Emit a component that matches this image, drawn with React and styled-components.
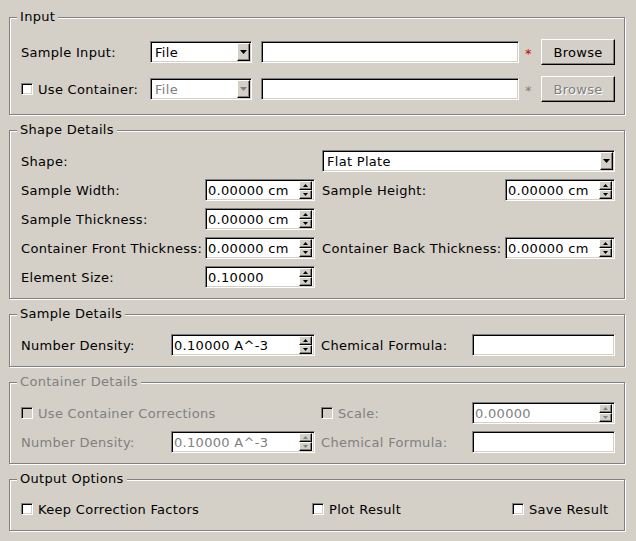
import React from 'react';
import styled, { createGlobalStyle, css } from 'styled-components';

const BG = '#d4d0c8';
const DIS = '#808080';

const GlobalStyle = createGlobalStyle`
  html, body { margin: 0; padding: 0; background: ${BG}; }
  body {
    font-family: "DejaVu Sans", "Liberation Sans", sans-serif;
    font-size: 13px;
    letter-spacing: 0.3px;
    color: #000;
  }
  * { box-sizing: border-box; }
`;

const sunken = css`
  background: #fff;
  border: 1px solid;
  border-color: #808080 #fff #fff #808080;
  box-shadow: inset 1px 1px 0 #000, inset -1px -1px 0 ${BG};
`;

const raised = css`
  background: ${BG};
  border: 1px solid;
  border-color: #fff #000 #000 #fff;
  box-shadow: inset -1px -1px 0 #808080;
`;

const Page = styled.main`
  width: 636px;
  height: 541px;
  padding: 17px 11px 0 9px;
  display: flex;
  flex-direction: column;
  gap: 15px;
`;

const Group = styled.section`
  display: flex;
  flex-direction: column;
  gap: ${p => p.$gap}px;
  padding: 0 9px ${p => p.$pb}px 11px;
  border: 1px solid #808080;
  box-shadow: 1px 1px 0 #fff, inset 1px 1px 0 #fff;
`;

const Title = styled.div`
  align-self: flex-start;
  margin: -8px 0 0 -4px;
  padding: 0 3px;
  height: 14px;
  line-height: 14px;
  background: ${BG};
  color: ${p => (p.$disabled ? DIS : '#000')};
`;

const Grid = styled.div`
  display: grid;
  grid-template-columns: ${p => p.$cols};
  grid-auto-rows: ${p => p.$rowH}px;
  row-gap: ${p => p.$rowGap || 0}px;
  align-items: center;
`;

const Label = styled.div`
  grid-column: ${p => p.$col || 'auto'};
  white-space: nowrap;
  color: ${p => (p.$disabled ? DIS : '#000')};
`;

const TextBox = styled.div`
  ${sunken};
  grid-column: ${p => p.$col || 'auto'};
  height: 22px;
  width: ${p => (p.$w ? `${p.$w}px` : 'auto')};
`;

const ComboFrame = styled.div`
  ${sunken};
  grid-column: ${p => p.$col || 'auto'};
  height: 22px;
  width: ${p => (p.$w ? `${p.$w}px` : 'auto')};
  padding: 1px;
  display: flex;
`;

const ComboText = styled.span`
  flex: 1;
  display: flex;
  align-items: center;
  padding-left: 3px;
  color: ${p => (p.$disabled ? DIS : '#000')};
`;

const ComboButton = styled.div`
  ${raised};
  width: 13px;
  display: flex;
  align-items: center;
  justify-content: center;
`;

const SpinFrame = styled.div`
  ${sunken};
  grid-column: ${p => p.$col || 'auto'};
  height: 22px;
  padding: 1px 2px 1px 1px;
  display: flex;
`;

const SpinValue = styled.span`
  flex: 1;
  display: flex;
  align-items: center;
  padding-left: 1px;
  white-space: nowrap;
  color: ${p => (p.$disabled ? DIS : '#000')};
`;

const SpinButtons = styled.div`
  width: 13px;
  display: flex;
  flex-direction: column;
`;

const SpinButton = styled.div`
  ${raised};
  flex: 1;
  display: flex;
  align-items: center;
  justify-content: center;
`;

const PushButton = styled.div`
  ${raised};
  width: 74px;
  height: 26px;
  display: flex;
  align-items: center;
  justify-content: center;
  color: ${p => (p.$disabled ? DIS : '#000')};
  text-shadow: ${p => (p.$disabled ? '1px 1px 0 #fff' : 'none')};
`;

const Required = styled.span`
  padding: 3px 0 0 6px;
  color: ${p => (p.$disabled ? DIS : '#c00000')};
`;

const CheckLabel = styled.div`
  grid-column: ${p => p.$col || 'auto'};
  display: flex;
  align-items: center;
  gap: 5px;
  white-space: nowrap;
  color: ${p => (p.$disabled ? DIS : '#000')};
`;

const CheckBox = styled.span`
  width: 12px;
  height: 12px;
  flex: none;
  border: 1px solid;
  border-color: #808080 #fff #fff #808080;
  box-shadow: inset 1px 1px 0 #000, inset -1px -1px 0 ${BG};
  background: ${p => (p.$disabled ? BG : '#fff')};
`;

function Arrow({ up, w = 7, h = 4, color = '#000' }) {
  const pts = up ? `0,${h} ${w},${h} ${w / 2},0` : `0,0 ${w},0 ${w / 2},${h}`;
  return (
    <svg width={w} height={h} viewBox={`0 0 ${w} ${h}`} style={{ display: 'block' }}>
      <polygon points={pts} fill={color} />
    </svg>
  );
}

function Combo({ value, disabled, w, col }) {
  return (
    <ComboFrame $w={w} $col={col}>
      <ComboText $disabled={disabled}>{value}</ComboText>
      <ComboButton>
        <Arrow color={disabled ? DIS : '#000'} />
      </ComboButton>
    </ComboFrame>
  );
}

function Spin({ value, disabled, col }) {
  const c = disabled ? DIS : '#000';
  return (
    <SpinFrame $col={col}>
      <SpinValue $disabled={disabled}>{value}</SpinValue>
      <SpinButtons>
        <SpinButton><Arrow up w={5} h={3} color={c} /></SpinButton>
        <SpinButton><Arrow w={5} h={3} color={c} /></SpinButton>
      </SpinButtons>
    </SpinFrame>
  );
}

function Check({ label, disabled, col }) {
  return (
    <CheckLabel $disabled={disabled} $col={col}>
      <CheckBox $disabled={disabled} />
      {label}
    </CheckLabel>
  );
}

const SHAPE_COLS = '184px 110px 7px 183px 110px';
const DETAIL_COLS = '150px 144px 6px 151px 143px';

export default function App() {
  return (
    <>
      <GlobalStyle />
      <Page>
        <Group $gap={15} $pb={12}>
          <Title>Input</Title>
          <Grid $cols="129px 111px 258px 22px 74px" $rowH={26} $rowGap={11}>
            <Label>Sample Input:</Label>
            <Combo value="File" w={102} />
            <TextBox />
            <Required>*</Required>
            <PushButton>Browse</PushButton>

            <Check label="Use Container:" />
            <Combo value="File" w={102} disabled />
            <TextBox />
            <Required $disabled>*</Required>
            <PushButton $disabled>Browse</PushButton>
          </Grid>
        </Group>

        <Group $gap={13} $pb={10}>
          <Title>Shape Details</Title>
          <Grid $cols={SHAPE_COLS} $rowH={22} $rowGap={7}>
            <Label>Shape:</Label>
            <Combo value="Flat Plate" col="4 / 6" />

            <Label>Sample Width:</Label>
            <Spin value="0.00000 cm" />
            <Label $col="4">Sample Height:</Label>
            <Spin value="0.00000 cm" />

            <Label>Sample Thickness:</Label>
            <Spin value="0.00000 cm" />

            <Label $col="1">Container Front Thickness:</Label>
            <Spin value="0.00000 cm" />
            <Label $col="4">Container Back Thickness:</Label>
            <Spin value="0.00000 cm" />

            <Label $col="1">Element Size:</Label>
            <Spin value="0.10000" />
          </Grid>
        </Group>

        <Group $gap={13} $pb={10}>
          <Title>Sample Details</Title>
          <Grid $cols={DETAIL_COLS} $rowH={22}>
            <Label>Number Density:</Label>
            <Spin value="0.10000 A^-3" />
            <Label $col="4">Chemical Formula:</Label>
            <TextBox />
          </Grid>
        </Group>

        <Group $gap={13} $pb={10}>
          <Title $disabled>Container Details</Title>
          <Grid $cols={DETAIL_COLS} $rowH={22} $rowGap={7}>
            <Check label="Use Container Corrections" disabled col="1 / 3" />
            <Check label="Scale:" disabled col="4" />
            <Spin value="0.00000" disabled />

            <Label $disabled>Number Density:</Label>
            <Spin value="0.10000 A^-3" disabled />
            <Label $col="4" $disabled>Chemical Formula:</Label>
            <TextBox />
          </Grid>
        </Group>

        <Group $gap={12} $pb={10}>
          <Title>Output Options</Title>
          <Grid $cols="291px 200px 1fr" $rowH={22}>
            <Check label="Keep Correction Factors" />
            <Check label="Plot Result" />
            <Check label="Save Result" />
          </Grid>
        </Group>
      </Page>
    </>
  );
}
